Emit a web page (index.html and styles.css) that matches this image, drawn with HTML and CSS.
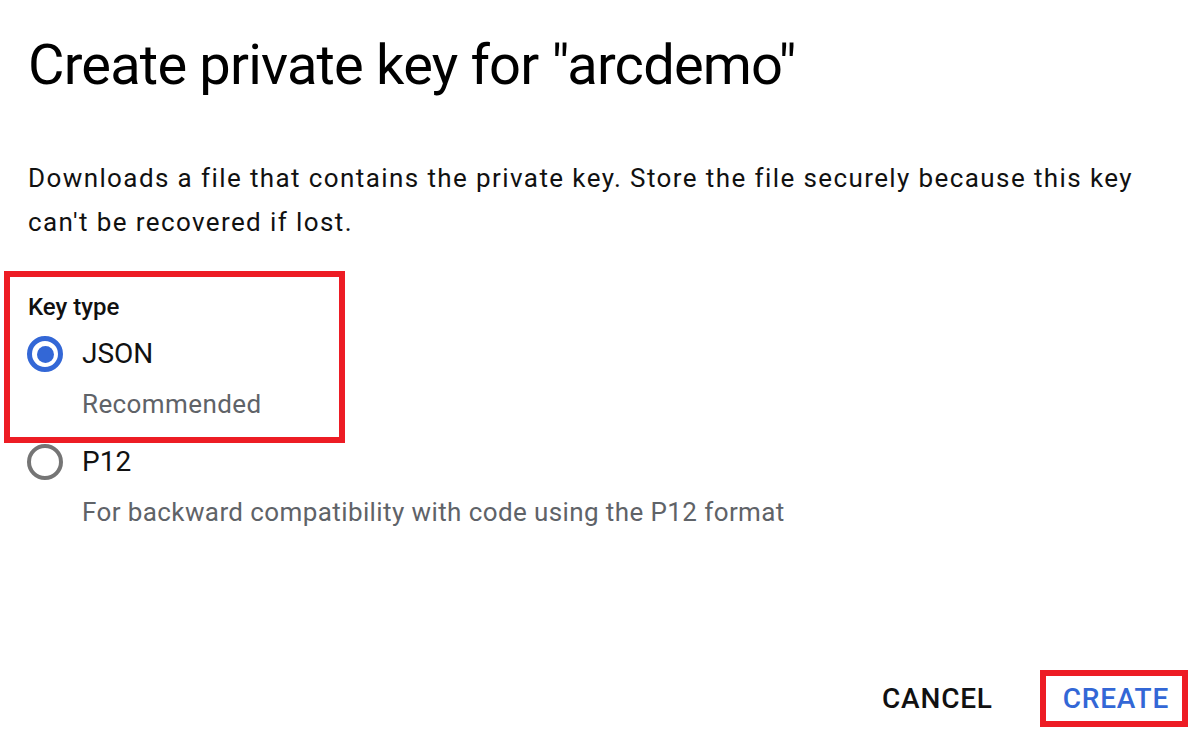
FILE: index.html
```html
<!DOCTYPE html>
<html lang="en">
<head>
<meta charset="utf-8">
<title>Create private key</title>
<link rel="stylesheet" href="styles.css">
</head>
<body>
<div class="dialog">
  <h1 class="title">Create private key for "arcdemo"</h1>
  <p class="desc">Downloads a file that contains the private key. Store the file securely because this key can't be recovered if lost.</p>
  <div class="highlight">
    <div class="label">Key type</div>
    <div class="option">
      <span class="radio checked"><span class="dot"></span></span>
      <span class="opt-label">JSON</span>
    </div>
    <div class="opt-desc">Recommended</div>
  </div>
  <div class="option option-p12">
    <span class="radio"></span>
    <span class="opt-label">P12</span>
  </div>
  <div class="opt-desc">For backward compatibility with code using the P12 format</div>
  <div class="footer">
    <button class="btn cancel">CANCEL</button>
    <button class="btn create">CREATE</button>
  </div>
</div>
</body>
</html>
```

FILE: styles.css
```css
html, body {
  margin: 0;
  padding: 0;
  background: #fff;
}
body {
  font-family: Roboto, "Noto Sans", sans-serif;
  color: #000;
  width: 1197px;
  height: 733px;
  overflow: hidden;
}
.dialog {
  padding-left: 28px;
}
.title {
  margin: 31px 0 0 0;
  font-size: 56px;
  font-weight: 400;
  line-height: 68px;
  letter-spacing: -0.8px;
  color: #000;
}
.desc {
  margin: 57px 0 0 0;
  font-size: 26px;
  line-height: 44px;
  letter-spacing: 1.4px;
  max-width: 1130px;
  color: #111;
}
.highlight {
  margin: 27px 0 0 -24px;
  border: 6px solid #ed1c24;
  padding: 14px 0 17px 18px;
  box-sizing: content-box;
  width: 311px;
}
.label {
  font-size: 24px;
  font-weight: 500;
  line-height: 32px;
  color: #111;
}
.option {
  display: flex;
  align-items: center;
  gap: 19px;
  margin-top: 13px;
  height: 36px;
  margin-left: -1px;
}
.option-p12 {
  margin-top: 1px;
}
.opt-label {
  font-size: 28px;
  line-height: 36px;
  color: #111;
}
.radio {
  width: 36px;
  height: 36px;
  box-sizing: border-box;
  border-radius: 50%;
  border: 4px solid #757575;
  display: flex;
  align-items: center;
  justify-content: center;
  flex: none;
}
.radio.checked {
  border: 5px solid #3367d6;
}
.dot {
  width: 17px;
  height: 17px;
  border-radius: 50%;
  background: #3367d6;
}
.opt-desc {
  margin: 16px 0 0 54px;
  font-size: 26px;
  line-height: 32px;
  letter-spacing: 0.4px;
  color: #5f6368;
}
.footer {
  display: flex;
  justify-content: flex-end;
  align-items: center;
  gap: 26px;
  margin-top: 142px;
  margin-right: 9px;
}
.btn {
  font-family: Roboto, "Noto Sans", sans-serif;
  font-size: 28px;
  font-weight: 500;
  line-height: 45px;
  background: none;
  border: 6px solid transparent;
  padding: 0 15px;
  margin: 0;
  letter-spacing: 0.8px;
}
.cancel {
  color: #111;
}
.create {
  color: #3367d6;
  border-color: #ed1c24;
  padding: 0 13px 0 17px;
}
```
